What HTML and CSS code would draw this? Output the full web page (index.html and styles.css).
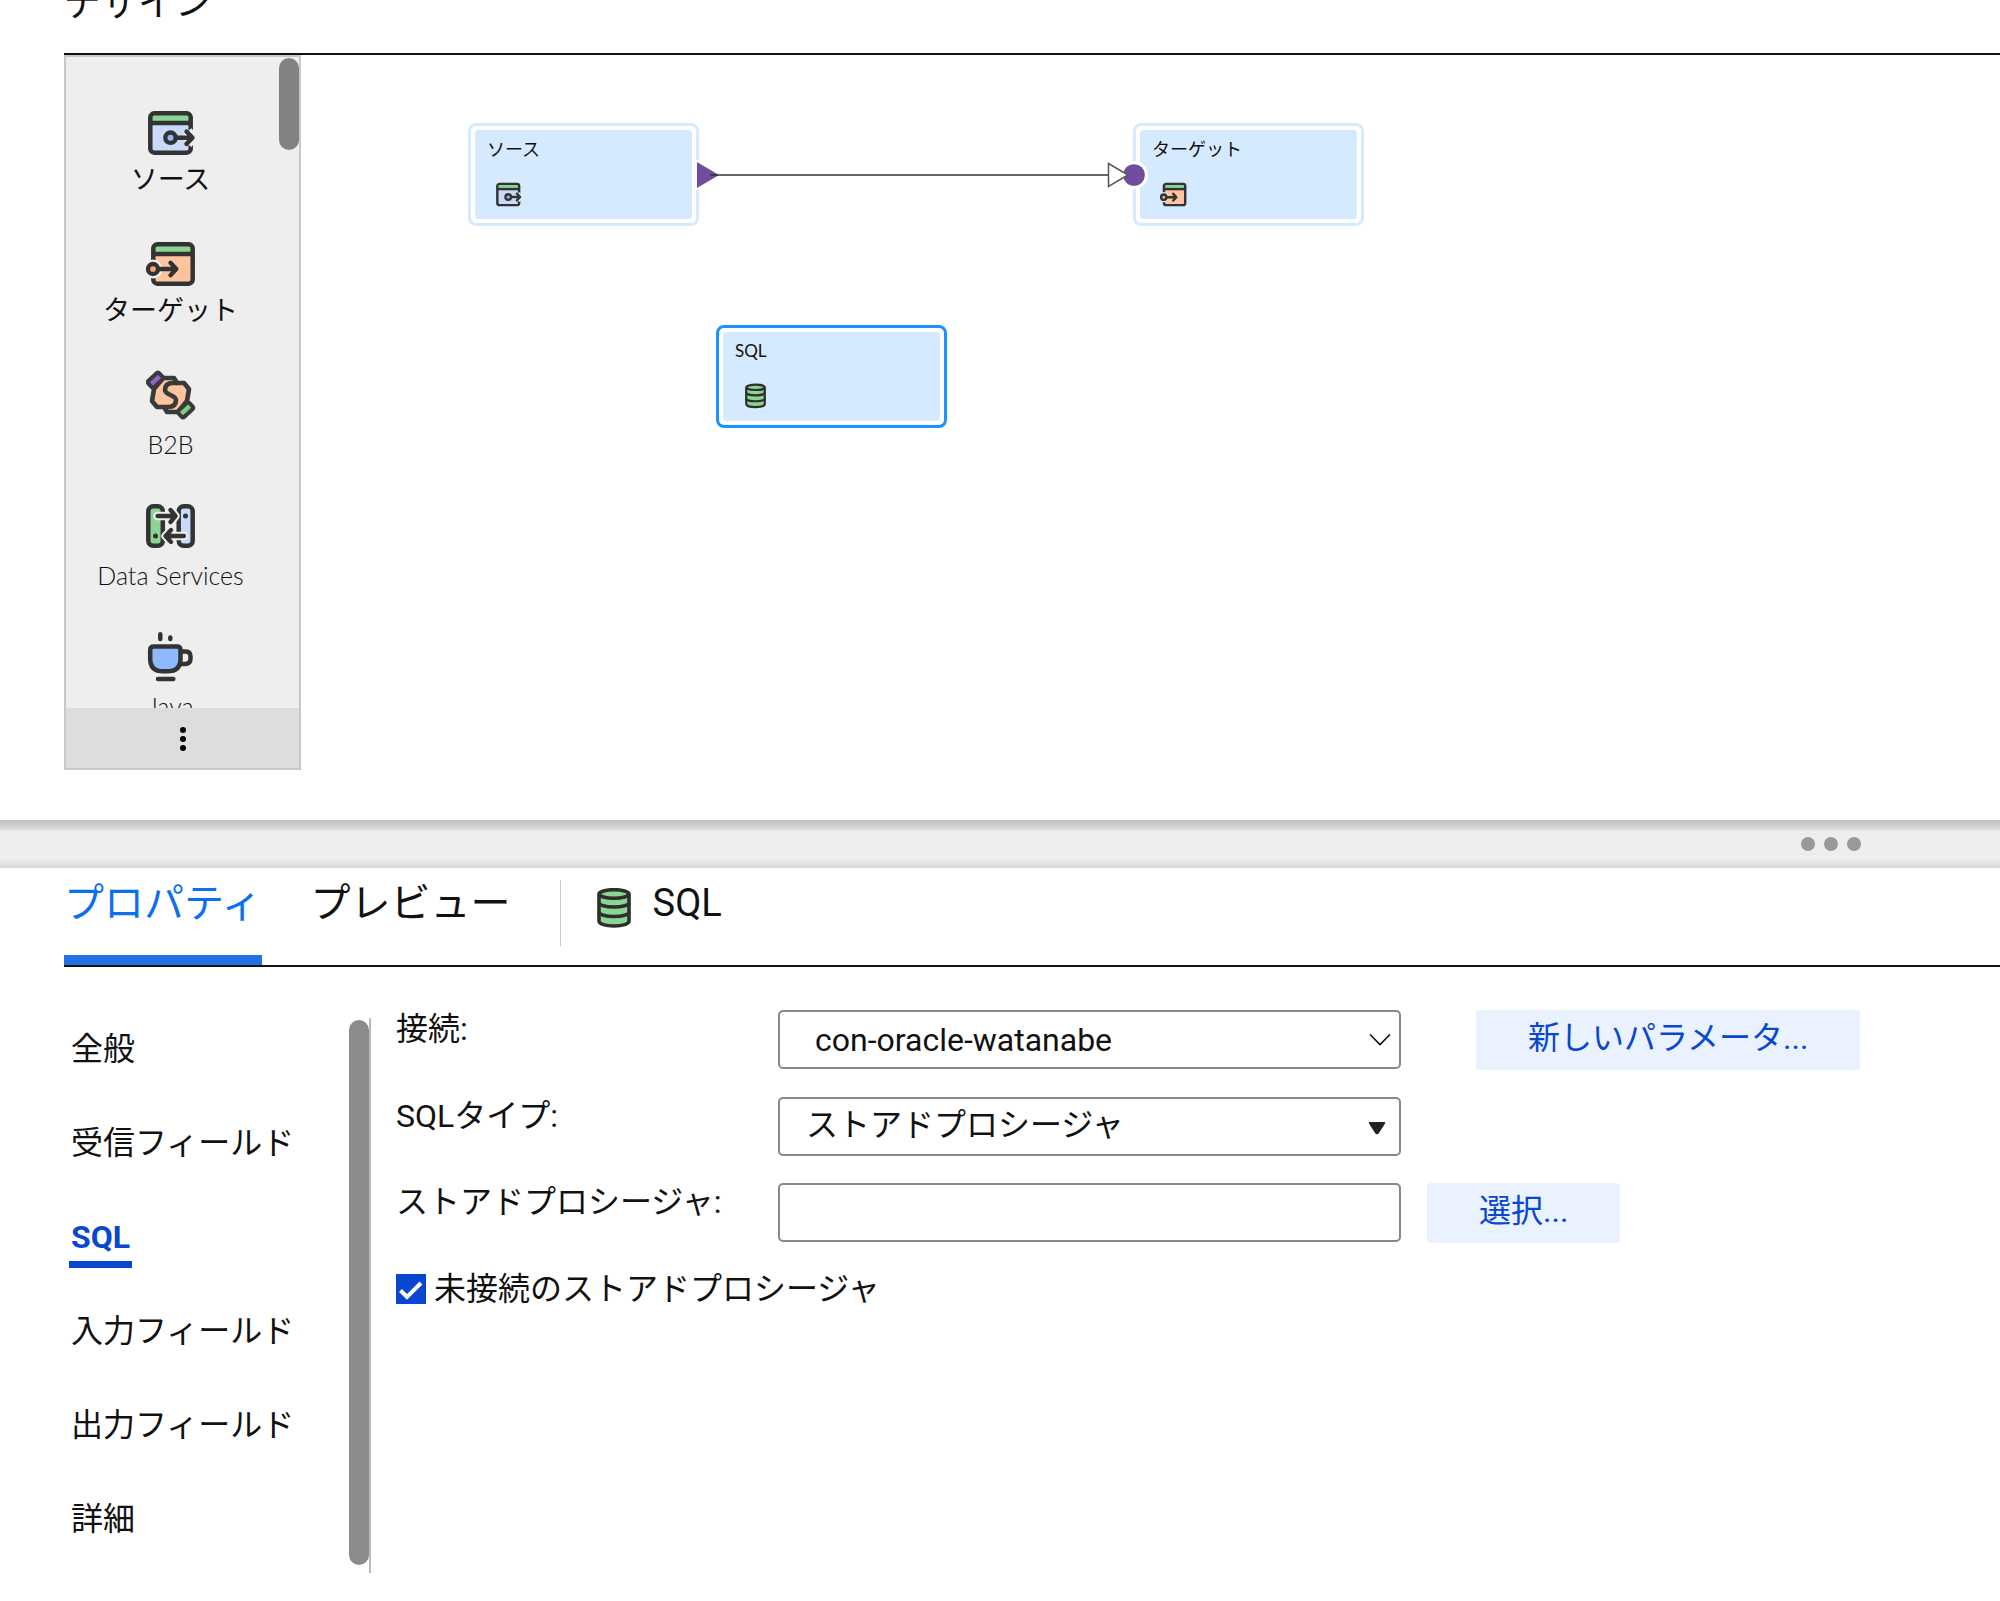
FILE: index.html
```html
<!DOCTYPE html>
<html lang="ja">
<head>
<meta charset="utf-8">
<meta name="viewport" content="width=device-width, initial-scale=1">
<title>デザイン</title>
<link rel="stylesheet" href="styles.css">
</head>
<body>
<svg class="sprite" aria-hidden="true">
  <symbol id="icon-source" viewBox="0 0 50 50">
    <rect x="4" y="5" width="41" height="40" rx="4" fill="#c9dafb"/>
    <path d="M5 15V8q0-3 3-3h33q3 0 3 3v7z" fill="#8ad592"/>
    <rect x="4.3" y="5.3" width="40.4" height="39.4" rx="4" fill="none" stroke="#333" stroke-width="4.5"/>
    <path d="M4 15h41" stroke="#333" stroke-width="4.4"/>
    <path class="halo" d="M40 29.7h5M41.500 23.500l5 6.200-5 6.200" stroke-width="10"/>
    <circle cx="24.500" cy="29.700" r="5.200" fill="#8fb8ff" stroke="#333" stroke-width="4.300"/>
    <path d="M30 29.700h15M40.500 23.500l6 6.200-6 6.200" fill="none" stroke="#333" stroke-width="4.400" stroke-linecap="round" stroke-linejoin="round"/>
  </symbol>
  <symbol id="icon-target" viewBox="0 0 50 50">
    <rect x="7" y="5" width="40" height="40" rx="4" fill="#ffc49d"/>
    <path d="M8 15V8q0-3 3-3h33q3 0 3 3v7z" fill="#8ad592"/>
    <rect x="7.300" y="5.300" width="39.400" height="39.400" rx="4" fill="none" stroke="#333" stroke-width="4.500"/>
    <path d="M7 15h40" stroke="#333" stroke-width="4.400"/>
    <circle cx="7" cy="30" r="9.500" fill="var(--halo)"/>
    <circle cx="7" cy="30" r="5" fill="#ffa670" stroke="#333" stroke-width="4.300"/>
    <path d="M13 30h16M24.500 23.800l5.800 6.200-5.800 6.200" fill="none" stroke="#333" stroke-width="4.400" stroke-linecap="round" stroke-linejoin="round"/>
  </symbol>
  <symbol id="icon-b2b" viewBox="0 0 50 50">
    <path d="M8 19L17 8H28L31 13H38L43 19L41 31L32 42H21L18 37H11L6 31Z" fill="#ffc49d" stroke="#3a3a3a" stroke-width="4.600" stroke-linejoin="round"/>
    <path d="M31 13H27C20 13 19 17 19 20C19 25 30 25 30 30C30 34 28 37 22 37H18" fill="none" stroke="#3a3a3a" stroke-width="4.600" stroke-linecap="round"/>
    <rect x="2" y="5.500" width="15" height="8.500" rx="2" transform="rotate(-43 10 10)" fill="#9166c9" stroke="#3a3a3a" stroke-width="4"/>
    <rect x="32" y="36" width="15" height="8.500" rx="2" transform="rotate(-43 39 40)" fill="#7fce89" stroke="#3a3a3a" stroke-width="4"/>
  </symbol>
  <symbol id="icon-services" viewBox="0 0 50 50">
    <rect x="2.300" y="5.300" width="14.500" height="39.500" rx="5" fill="#8ad592" stroke="#333" stroke-width="4.500"/>
    <rect x="32.700" y="5.300" width="14" height="39.500" rx="5" fill="#c9dafb" stroke="#333" stroke-width="4.500"/>
    <g fill="none" stroke-linecap="round" stroke-linejoin="round">
      <path d="M11.500 15H29M24.500 9l5 6-5 6M38 35H20M25 29l-5.500 6 5.500 6" stroke="var(--halo)" stroke-width="8.400"/>
      <path d="M11.500 15H29M24.500 9l5 6-5 6M38 35H20M25 29l-5.500 6 5.500 6" stroke="#333" stroke-width="4.300"/>
    </g>
    <circle cx="39.500" cy="15" r="2.500" fill="#333"/>
    <circle cx="9.500" cy="35" r="2.500" fill="#333"/>
  </symbol>
  <symbol id="icon-java" viewBox="0 0 50 50">
    <g fill="none" stroke="#333" stroke-width="4.500" stroke-linecap="round" stroke-linejoin="round">
      <path d="M14.300 2.300V7M24.300 5.500V7M12 47H27.300"/>
      <path d="M36 19.500h3.500q5 0 5 5v2q0 5.500-5.500 5.500h-4"/>
      <path d="M8 14.500H31q3.500 0 3.500 3.500V27q0 12.300-13 12.300h-4.300q-13 0-13-12.300V18q0-3.500 3.800-3.500z" fill="#8fb8ff"/>
    </g>
  </symbol>
  <symbol id="icon-database" viewBox="0 0 34 40">
    <g fill="#8ad592" stroke="#2e2e2e" stroke-width="3.600">
      <path d="M2 6.500V33c0 3 6.500 5 15 5S32 36 32 33V6.500"/>
      <ellipse cx="17" cy="6" rx="15" ry="4.300"/>
      <path d="M2 14.500c0 2.500 6.500 4.500 15 4.500s15-2 15-4.500M2 24c0 2.500 6.500 4.500 15 4.500s15-2 15-4.500" fill="none"/>
    </g>
  </symbol>
</svg>

<main class="page">
  <section class="design">
    <h1 class="design-title">デザイン</h1>
    <div class="workspace">
      <aside class="palette">
        <div class="palette-body">
          <ul class="palette-list">
            <li class="palette-item"><svg class="palette-icon"><use href="#icon-source"/></svg><span>ソース</span></li>
            <li class="palette-item"><svg class="palette-icon"><use href="#icon-target"/></svg><span>ターゲット</span></li>
            <li class="palette-item palette-item-latin"><svg class="palette-icon"><use href="#icon-b2b"/></svg><span>B2B</span></li>
            <li class="palette-item palette-item-latin"><svg class="palette-icon"><use href="#icon-services"/></svg><span>Data Services</span></li>
            <li class="palette-item palette-item-latin"><svg class="palette-icon"><use href="#icon-java"/></svg><span>Java</span></li>
          </ul>
          <div class="palette-thumb"></div>
        </div>
        <button class="palette-more" type="button" aria-label="その他">
          <svg width="8" height="26" viewBox="0 0 8 26"><circle cx="4" cy="4" r="3"/><circle cx="4" cy="13" r="3"/><circle cx="4" cy="22" r="3"/></svg>
        </button>
      </aside>
      <div class="canvas">
        <div class="node node-source"><div class="node-face"><span>ソース</span><svg class="node-icon"><use href="#icon-source"/></svg></div></div>
        <div class="node node-target"><div class="node-face"><span>ターゲット</span><svg class="node-icon"><use href="#icon-target"/></svg></div></div>
        <div class="node node-sql"><div class="node-face"><span>SQL</span><svg class="node-icon node-icon-db"><use href="#icon-database"/></svg></div></div>
        <svg class="link" width="456" height="32" viewBox="0 0 456 32">
          <path d="M2 1h4v30H2z" fill="#fff"/>
          <circle cx="440" cy="16" r="14" fill="#fff"/>
          <path d="M3 3L25 16L3 29z" fill="#6f4e9f"/>
          <path d="M16 16H414" stroke="#333" stroke-width="1.500"/>
          <circle cx="440" cy="16" r="10.800" fill="#6f4e9f"/>
          <path d="M414.500 4.500L434 16L414.500 27.500z" fill="#fff" stroke="#555" stroke-width="1.500"/>
        </svg>
      </div>
    </div>
  </section>

  <div class="splitter"><i></i><i></i><i></i></div>

  <section class="details">
    <header class="tabs">
      <button class="tab tab-active" type="button">プロパティ</button>
      <button class="tab" type="button">プレビュー</button>
      <div class="subject"><svg class="subject-icon"><use href="#icon-database"/></svg><span>SQL</span></div>
    </header>
    <div class="details-body">
      <nav class="side">
        <a class="side-link" href="#general">全般</a>
        <a class="side-link" href="#incoming">受信フィールド</a>
        <a class="side-link side-link-active" href="#sql">SQL</a>
        <a class="side-link" href="#input">入力フィールド</a>
        <a class="side-link" href="#output">出力フィールド</a>
        <a class="side-link" href="#advanced">詳細</a>
      </nav>
      <div class="side-scroll"><div class="side-thumb"></div></div>
      <form class="form">
        <div class="row">
          <label class="label" for="connection">接続:</label>
          <div class="field">
            <select id="connection" class="control control-combo"><option>con-oracle-watanabe</option></select>
            <svg class="chevron" width="22" height="14" viewBox="0 0 22 14"><path d="M1 1.500L11 11.500L21 1.500" fill="none" stroke="#111" stroke-width="1.600"/></svg>
          </div>
          <button class="button button-apart" type="button">新しいパラメータ...</button>
        </div>
        <div class="row">
          <label class="label" for="sql-type">SQLタイプ:</label>
          <div class="field">
            <select id="sql-type" class="control"><option>ストアドプロシージャ</option></select>
            <svg class="caret" width="18" height="14" viewBox="0 0 18 14"><path d="M1.500 1h15q1 0 .500 1.500L11 12q-2 2.500-4 0L1 2.500Q.500 1 1.500 1z" fill="#222"/></svg>
          </div>
        </div>
        <div class="row">
          <label class="label" for="procedure">ストアドプロシージャ:</label>
          <div class="field"><input id="procedure" class="control" type="text"></div>
          <button class="button" type="button">選択...</button>
        </div>
        <label class="check"><input class="check-box" type="checkbox" checked><span>未接続のストアドプロシージャ</span></label>
      </form>
    </div>
  </section>
</main>
</body>
</html>
```
FILE: styles.css
```css
* { box-sizing: border-box; }

body {
  margin: 0;
  background: #fff;
  color: #111;
  font-family: Roboto, "Noto Sans CJK JP", sans-serif;
  font-size: 32px;
  line-height: 38px;
}

button, input, select { font: inherit; color: inherit; }

.sprite { position: absolute; width: 0; height: 0; }

.page { overflow: hidden; }

/* Design area */
.design { padding: 0 0 50px 64px; }

.design-title {
  margin: -20px 0 0;
  padding-bottom: 25px;
  border-bottom: 2px solid #111;
  font-size: 37px;
  font-weight: 400;
  line-height: 48px;
}

.workspace { display: flex; }

.palette {
  --halo: #eee;
  flex: none;
  width: 237px;
  border: 2px solid #c8c8c8;
  background: #eee;
}

.palette-body {
  display: flex;
  height: 651px;
  overflow: hidden;
}

.palette-list {
  flex: 1;
  display: grid;
  grid-auto-rows: 131px;
  margin: 0;
  padding: 51px 4px 0 0;
  list-style: none;
}

.palette-item {
  display: flex;
  flex-direction: column;
  align-items: center;
  gap: 6px;
  font-size: 27px;
  line-height: 32px;
}

.palette-item-latin {
  gap: 8px;
  font-family: Lato, sans-serif;
  font-size: 25px;
  font-weight: 300;
}

.palette-icon { width: 50px; height: 50px; }

.halo {
  fill: none;
  stroke: var(--halo);
  stroke-linejoin: round;
}

.palette-thumb {
  width: 20px;
  height: 92px;
  margin-top: 1px;
  border-radius: 10px;
  background: #828282;
}

.palette-more {
  display: flex;
  align-items: center;
  justify-content: center;
  width: 100%;
  height: 60px;
  padding: 2px 0 0;
  border: 0;
  background: #ddd;
}

.canvas { position: relative; flex: 1; }

.node {
  --halo: #d6eaff;
  position: absolute;
  width: 231px;
  height: 103px;
  padding: 4px;
  border: 3px solid #d6eaff;
  border-radius: 8px;
  background: #fff;
  font-family: Lato, "Noto Sans CJK JP", sans-serif;
  font-size: 18px;
  line-height: 22px;
}

.node-face {
  display: flex;
  flex-direction: column;
  gap: 21px;
  height: 100%;
  padding: 8px 12px;
  border-radius: 4px;
  background: #d6eaff;
}

.node-icon { width: 27px; height: 27px; margin-left: 8px; }
.node-icon-db { width: 21px; height: 26px; margin-left: 10px; }

.node-source { left: 167px; top: 68px; }
.node-target { left: 832px; top: 68px; }
.node-sql { left: 415px; top: 270px; border-color: #1a93ff; font-size: 17px; }

.link { position: absolute; left: 393px; top: 104px; }

/* Splitter */
.splitter {
  display: flex;
  justify-content: flex-end;
  align-items: center;
  gap: 9px;
  height: 48px;
  padding-right: 139px;
  background: linear-gradient(#bdbdbd, #e0e0e0 10px, #eee 11px, #eee 38px, #d8d8d8);
}

.splitter i {
  width: 14px;
  height: 14px;
  border-radius: 50%;
  background: #999;
}

/* Details area */
.details { padding-left: 64px; }

.tabs {
  display: flex;
  align-items: stretch;
  height: 99px;
  border-bottom: 2px solid #111;
  font-size: 40px;
  line-height: 48px;
}

.tab {
  margin-right: 49px;
  padding: 0 0 16px;
  border: 0;
  border-bottom: 10px solid transparent;
  background: none;
}

.tab-active { border-color: #2272e3; color: #0b6fee; }

.subject {
  display: flex;
  align-items: flex-start;
  gap: 22px;
  height: 66px;
  margin-top: 12px;
  padding-left: 36px;
  border-left: 1px solid #ccc;
  font-size: 38px;
  line-height: 46px;
}

.subject-icon { width: 34px; height: 40px; margin-top: 8px; }

.details-body { display: flex; padding-top: 43px; }

.side {
  flex: none;
  display: grid;
  grid-auto-rows: 94px;
  justify-items: start;
  width: 285px;
  padding-left: 5px;
  line-height: 48px;
}

.side-link {
  align-self: start;
  margin-top: 15px;
  padding: 0 2px;
  border-bottom: 7px solid transparent;
  color: inherit;
  text-decoration: none;
}

.side-link-active {
  border-color: #0847d0;
  color: #0847d0;
  font-weight: 700;
}

.side-scroll {
  flex: none;
  width: 22px;
  height: 555px;
  margin-top: 8px;
  margin-bottom: 20px;
  padding-top: 2px;
  border-right: 2px solid #bbb;
}

.side-thumb {
  height: 545px;
  border-radius: 10px;
  background: #8b8b8b;
}

.form {
  flex: 1;
  display: flex;
  flex-direction: column;
  gap: 27px;
  padding-left: 25px;
}

.row {
  display: grid;
  grid-template-columns: 382px minmax(200px, 623px) auto;
  justify-content: start;
  align-items: start;
}

.field { position: relative; }

.control {
  display: block;
  width: 100%;
  height: 59px;
  padding: 0 60px 4px 26px;
  border: 2px solid #888;
  border-radius: 5px;
  background: #fff;
  appearance: none;
}

.control-combo { padding: 0 60px 0 35px; }

.chevron { position: absolute; right: 10px; top: 23px; pointer-events: none; }
.caret { position: absolute; right: 15px; top: 24px; pointer-events: none; }

.button {
  height: 60px;
  margin-left: 26px;
  padding: 0 52px 4px;
  border: 0;
  border-radius: 4px;
  background: #ebf2ff;
  color: #0847d0;
}

.button-apart { margin-left: 75px; }

.check {
  display: flex;
  align-items: center;
  gap: 8px;
}

.check-box {
  width: 30px;
  height: 30px;
  margin: 0;
  border-radius: 0;
  appearance: none;
  background: #0847d0 url("data:image/svg+xml,%3Csvg xmlns='http://www.w3.org/2000/svg' viewBox='0 0 30 30'%3E%3Cpath d='M4.500 16.500l6.500 6.500L25 9' fill='none' stroke='white' stroke-width='4'/%3E%3C/svg%3E") center / 100% no-repeat;
}
```
